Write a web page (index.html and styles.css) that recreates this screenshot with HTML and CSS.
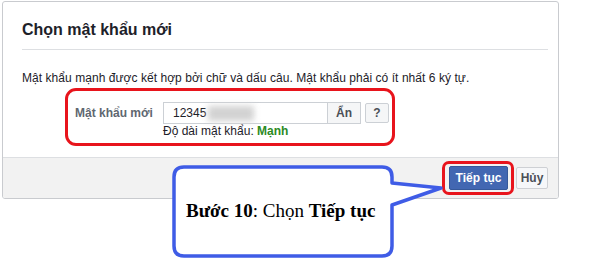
FILE: index.html
```html
<!DOCTYPE html>
<html lang="vi">
<head>
<meta charset="utf-8">
<title>Chọn mật khẩu mới</title>
<link rel="stylesheet" href="styles.css">
</head>
<body>
<div class="stage">
  <div class="card">
    <div class="head"><h2 class="title">Chọn mật khẩu mới</h2></div>
    <div class="body">
      <p class="intro">Mật khẩu mạnh được kết hợp bởi chữ và dấu câu. Mật khẩu phải có ít nhất 6 ký tự.</p>
      <div class="field">
        <label class="label">Mật khẩu mới</label>
        <div class="control">
          <div class="inputrow">
            <div class="input"><span>12345</span><span class="blur"></span></div>
            <button class="btn-hide">Ẩn</button>
            <button class="btn-help">?</button>
          </div>
          <div class="strength">Độ dài mật khẩu: <b class="strong">Mạnh</b></div>
        </div>
      </div>
    </div>
    <div class="foot">
      <button class="btn-primary">Tiếp tục</button>
      <button class="btn-cancel">Hủy</button>
    </div>
  </div>

  <div class="mark mark-field"></div>
  <div class="mark mark-button"></div>

  <svg class="callout-shape" width="592" height="275" viewBox="0 0 592 275">
    <path d="M184,167 H382 Q392,167 392,177 V183 L441,188 L392,205 V246 Q392,256 382,256 H184 Q174,256 174,246 V177 Q174,167 184,167 Z" fill="#fff" stroke="#3f5ce6" stroke-width="3.5" stroke-linejoin="round"/>
  </svg>
  <div class="callout-text"><b>Bước 10</b>: Chọn <b>Tiếp tục</b></div>
</div>
</body>
</html>
```

FILE: styles.css
```css
* { box-sizing: border-box; }
html, body { margin: 0; padding: 0; background: #fff; }
body { font-family: "Liberation Sans", Arial, sans-serif; font-size: 12px; color: #1d2129; }

.stage { position: relative; width: 592px; height: 275px; overflow: hidden; padding: 1px 0 0 2px; }

.card {
  width: 557px;
  height: 198px;
  border: 1px solid #c9cbcf;
  border-radius: 3px;
  background: #fff;
  display: flex;
  flex-direction: column;
  overflow: hidden;
}

.head {
  margin: 0 10px 0 19px;
  padding-top: 18px;
  height: 48px;
  border-bottom: 1px solid #dddfe2;
}
.title {
  margin: 0;
  font-size: 16px;
  line-height: 20px;
  font-weight: bold;
  color: #1d2129;
}

.body { padding: 20px 0 0 19px; flex: 1; }
.intro { margin: 0; line-height: 16px; color: #1d2129; letter-spacing: 0.05px; }

.field {
  display: flex;
  align-items: flex-start;
  margin-top: 16px;
  padding-left: 53px;
}
.label {
  width: 88px;
  height: 22px;
  line-height: 22px;
  font-weight: bold;
  color: #606770;
}
.inputrow { display: flex; align-items: center; height: 22px; }
.input {
  width: 165px;
  height: 22px;
  border: 1px solid #ccd0d5;
  padding-left: 9px;
  line-height: 20px;
  display: flex;
  align-items: center;
  color: #1d2129;
}
.blur {
  display: inline-block;
  width: 46px;
  height: 15px;
  background: #d2d2d2;
  filter: blur(3px);
  margin-left: 2px;
}
button {
  font-family: "Liberation Sans", Arial, sans-serif;
  font-size: 12px;
  font-weight: bold;
  cursor: pointer;
}
.btn-hide {
  width: 34px;
  height: 22px;
  margin-left: -1px;
  border: 1px solid #ccd0d5;
  background: #f5f6f7;
  color: #4b4f56;
  padding: 0;
}
.btn-help {
  width: 24px;
  height: 20px;
  margin-left: 4px;
  border: 1px solid #ccd0d5;
  border-radius: 2px;
  background: #f5f6f7;
  color: #4b4f56;
  padding: 0;
}
.strength { line-height: 14px; color: #1d2129; }
.strong { color: #2c8a24; }

.foot {
  height: 41px;
  border-top: 1px solid #dddfe2;
  background: #f2f2f2;
  display: flex;
  justify-content: flex-end;
  align-items: center;
  gap: 8px;
  padding-right: 10px;
}
.btn-primary {
  width: 59px;
  height: 24px;
  background: #4267b2;
  border: 1px solid #365899;
  border-radius: 2px;
  color: #fff;
  padding: 0;
}
.btn-cancel {
  width: 32px;
  height: 22px;
  background: #f6f7f9;
  border: 1px solid #ced0d4;
  border-radius: 2px;
  color: #4b4f56;
  padding: 0;
}

.mark {
  position: absolute;
  border: 3px solid #e8141c;
}
.mark-field { left: 65px; top: 88px; width: 330px; height: 58px; border-radius: 11px; }
.mark-button { left: 442px; top: 161px; width: 72px; height: 34px; border-radius: 7px; }

.callout-shape { position: absolute; left: 0; top: 0; }
.callout-text {
  position: absolute;
  left: 186px;
  top: 200px;
  font-family: "Liberation Serif", "Times New Roman", serif;
  font-size: 19px;
  line-height: 22px;
  color: #000;
}
```
